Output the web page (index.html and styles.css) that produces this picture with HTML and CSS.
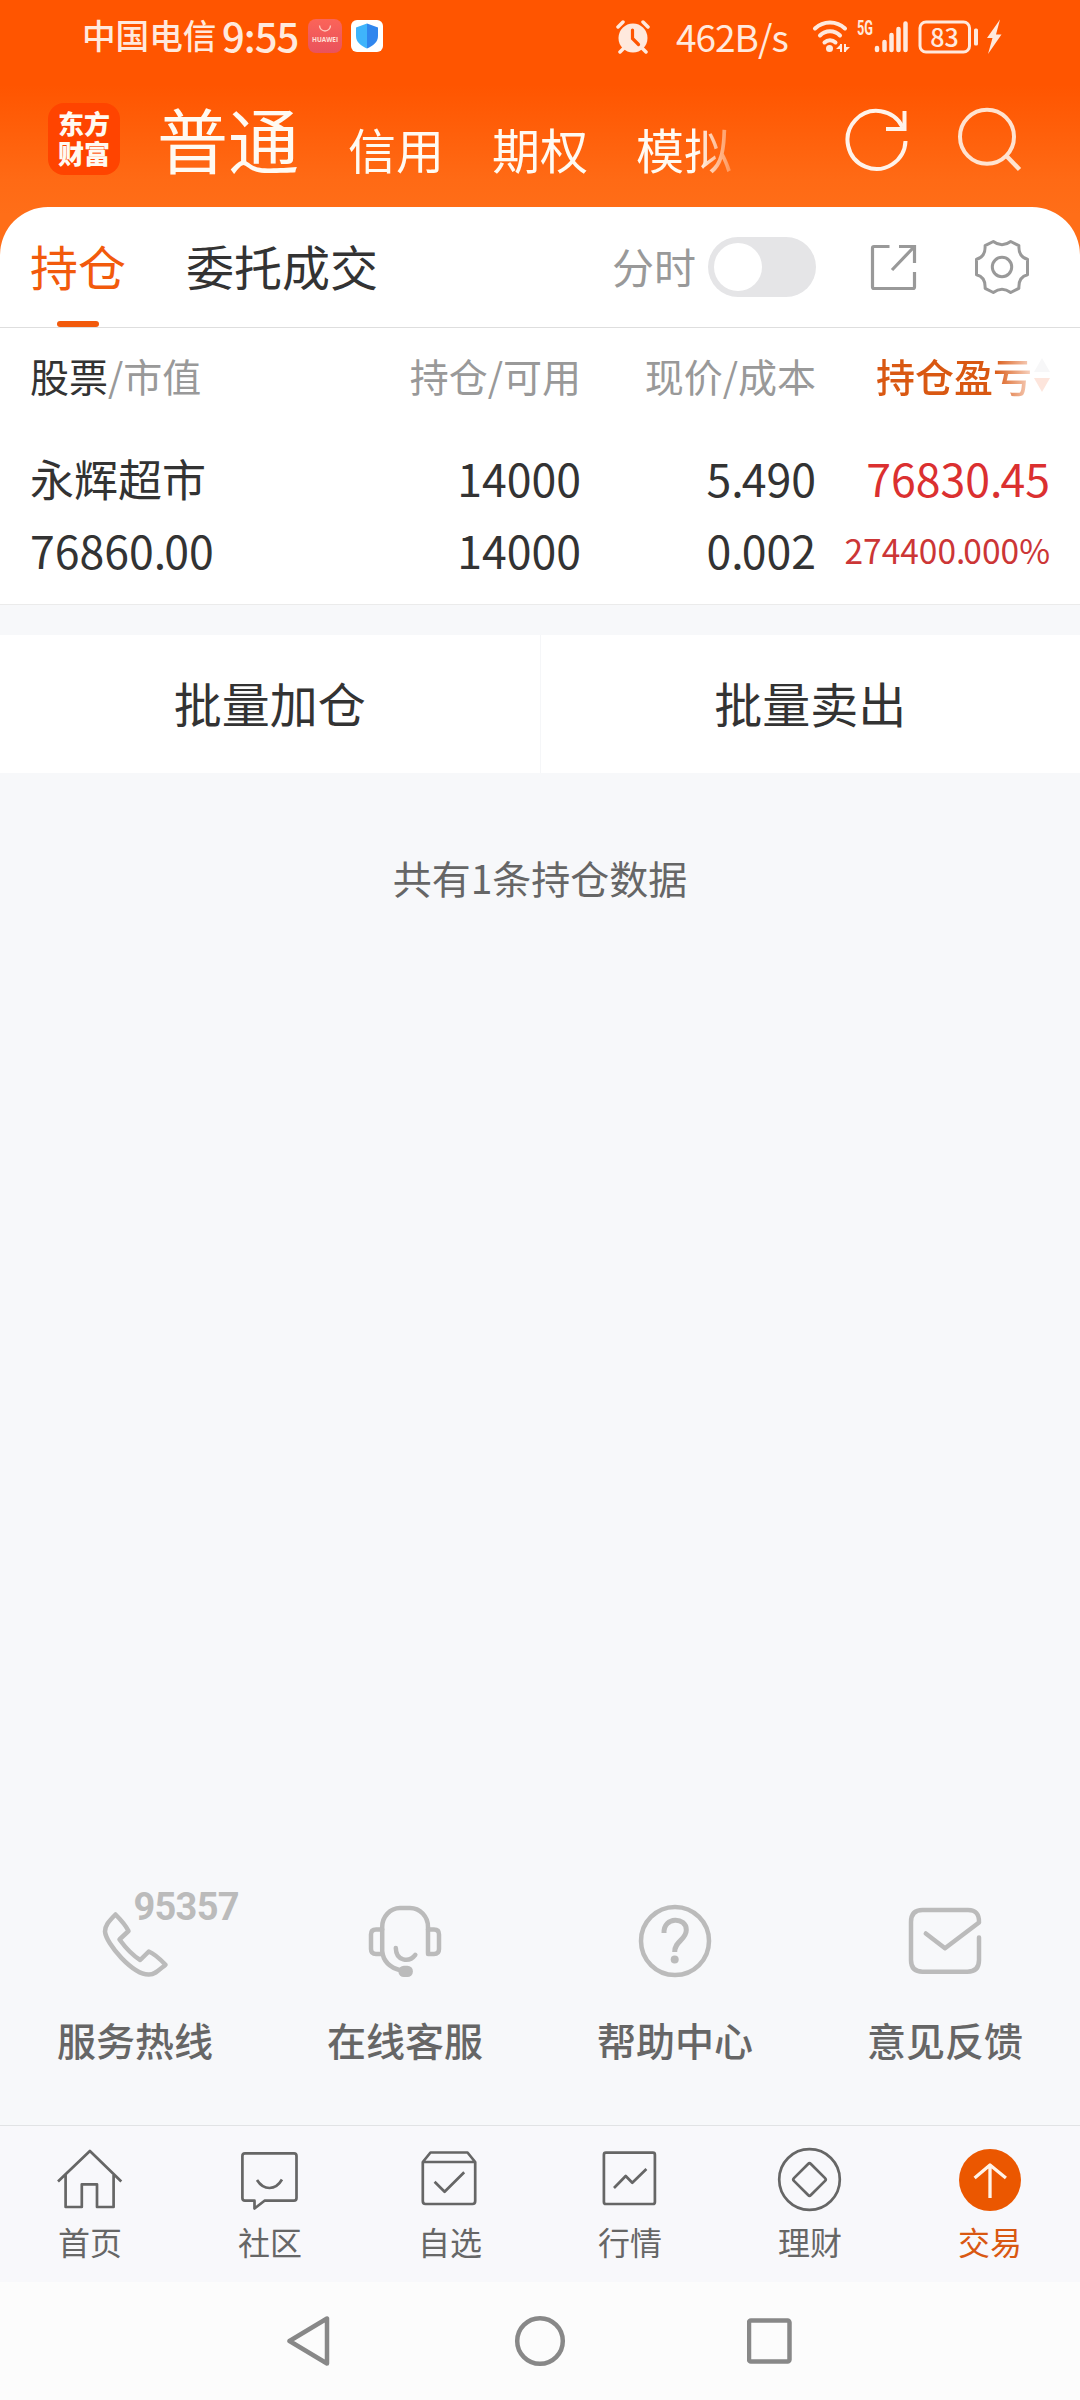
FILE: index.html
```html
<!DOCTYPE html>
<html lang="zh-CN">
<head>
<meta charset="utf-8">
<title>持仓</title>
<link rel="stylesheet" href="styles.css">
</head>
<body>
<div class="screen">
  <header class="top">
    <div class="status">
      <span class="carrier">中国电信</span>
      <span class="clock">9:55</span>
      <svg class="app-huawei" width="34" height="34" viewBox="0 0 34 34">
        <defs><linearGradient id="hw" x1="0" y1="0" x2="0" y2="1"><stop offset="0" stop-color="#fb6459"/><stop offset="1" stop-color="#e9525c"/></linearGradient></defs>
        <rect width="34" height="34" rx="8" fill="url(#hw)"/>
        <path d="M11.500 6.500a5.500 5.500 0 0 0 11 0" fill="none" stroke="#ffc9bd" stroke-width="1.300"/>
        <text x="17" y="22.500" text-anchor="middle" textLength="26" lengthAdjust="spacingAndGlyphs" class="hw-text">HUAWEI</text>
      </svg>
      <svg class="app-shield" width="32" height="32" viewBox="0 0 32 32">
        <rect width="32" height="32" rx="6" fill="#fff"/>
        <path d="M16 3.500 5 7.500V16c0 6 5 10 11 12.500z" fill="#3fb4fb"/>
        <path d="M16 3.500 27 7.500V16c0 6-5 10-11 12.500z" fill="#2f86ee"/>
      </svg>
      <svg class="alarm" width="34" height="34" viewBox="0 0 34 34">
        <circle cx="17" cy="18" r="14.500" fill="#ffe9dd"/>
        <path d="M2 7 7 2M32 7 27 2M4 32l4-4M30 32l-4-4" stroke="#ffe9dd" stroke-width="3.500" stroke-linecap="round"/>
        <path d="M16.500 10v8.500l6 6" fill="none" stroke="#ff5500" stroke-width="3.200" stroke-linecap="round"/>
      </svg>
      <span class="speed">462B/s</span>
      <svg class="signals" width="196" height="40" viewBox="0 0 196 40">
        <g fill="none" stroke="#ffe9dd" stroke-width="4" stroke-linecap="round">
          <path d="M4 11.500a21.500 21.500 0 0 1 30 0"/>
          <path d="M9 18.500a14 14 0 0 1 20 0"/>
          <path d="M13.500 25.500a8 8 0 0 1 11 0"/>
          <path d="M66 33v-2M73.500 33v-8M80.500 33V18M87.500 33V12M94.500 33V6.500" stroke-width="4.500"/>
        </g>
        <circle cx="18.500" cy="31.500" r="3.500" fill="#ffe9dd"/>
        <path d="M30 27v8M34 27v8" stroke="#ffe9dd" stroke-width="2"/>
        <path d="M30 27l-5 5h5zM34 35l5-5h-5z" fill="#ffe9dd"/>
        <text x="46" y="18" textLength="16" lengthAdjust="spacingAndGlyphs" class="net-text">5G</text>
        <rect x="109" y="5" width="49.500" height="30" rx="6" fill="none" stroke="#ffe9dd" stroke-width="3"/>
        <rect x="163" y="11.500" width="4" height="17" rx="1.500" fill="#ffe9dd"/>
        <text x="133.500" y="29.500" text-anchor="middle" class="bat-text">83</text>
        <path d="M189 2.500 176 21h5.500L177 37 190.500 17.500h-5.500z" fill="#ffe9dd"/>
      </svg>
    </div>
    <div class="nav">
      <div class="logo">东方<br>财富</div>
      <nav class="accounts">
        <span class="account-active">普通</span>
        <span>信用</span>
        <span>期权</span>
        <span>模拟</span>
      </nav>
      <svg class="refresh" width="66" height="66" viewBox="0 0 66 66" fill="none" stroke="#fff3ea" stroke-width="4">
        <path d="M61.500 34A29 29 0 1 1 58.500 20"/><path d="M60.500 4v19.700M42 22h20.500"/>
      </svg>
      <svg class="search" width="66" height="66" viewBox="0 0 66 66" fill="none" stroke="#ffe3d0" stroke-width="4">
        <circle cx="31" cy="29.700" r="27"/><path d="M50.500 49 63.500 62.500" stroke-width="4.500"/>
      </svg>
    </div>
  </header>

  <main class="sheet">
    <div class="tabs">
      <span class="tab tab-active">持仓</span>
      <span class="tab">委托成交</span>
      <span class="timing">分时</span>
      <span class="toggle"><i class="knob"></i></span>
      <svg class="export" width="48" height="48" viewBox="0 0 48 48" fill="none" stroke="#999" stroke-width="3.200" stroke-linejoin="round">
        <path d="M19.500 3.500H4q-1.500 0-1.500 1.500v39q0 1.500 1.500 1.500h39q1.500 0 1.500-1.500V29"/>
        <path d="M29 3.500h15.500V20M43 5 22 27" stroke-linejoin="miter"/>
      </svg>
      <svg class="gear" width="56" height="56" viewBox="0 0 56 56" fill="none" stroke="#999" stroke-width="3" stroke-linejoin="round">
        <path d="M19.300 2.500Q28 9 36.700 2.500L44.900 6.700Q44.300 18 53.500 20.200V35.800Q44.300 38 44.900 49.300L36.700 53.500Q28 47 19.300 53.500L11.100 49.300Q11.700 38 2.500 35.800V20.200Q11.700 18 11.100 6.700Z"/>
        <circle cx="28" cy="28" r="9.700"/>
      </svg>
    </div>
    <div class="holdings">
      <div class="row head">
        <span><b>股票</b>/市值</span>
        <span class="num">持仓/可用</span>
        <span class="num">现价/成本</span>
        <span class="sorted">持仓盈亏
          <svg width="16" height="34" viewBox="0 0 16 34"><path d="M8 0 16 14H0z" fill="#f7f7f8"/><path d="M8 34 16 20H0z" fill="#fde5dc"/></svg>
        </span>
      </div>
      <div class="row body">
        <span class="name">永辉超市</span><span class="num">14000</span><span class="num">5<i>.</i>490</span><span class="num gain">76830<i>.</i>45</span>
      </div>
      <div class="row body">
        <span>76860<i>.</i>00</span><span class="num">14000</span><span class="num">0<i>.</i>002</span><span class="num gain rate">274400<i>.</i>000%</span>
      </div>
    </div>
  </main>

  <div class="batch">
    <span>批量加仓</span>
    <span>批量卖出</span>
  </div>
  <p class="count">共有1条持仓数据</p>

  <div class="services">
    <div class="service">
      <svg width="270" height="100" viewBox="0 0 270 100">
        <path d="M115.500 34.500C108 42 105 46 105 51.500C106 64 133 95 149 94.500C155 94.500 159 90 165.500 84.700C160 79 155 74 148.800 71.500L140.200 80C132 75 125 67 119.500 59.500L128.500 51C125 44 120 39 115.500 34.500Z"/>
        <text x="186.500" y="40" text-anchor="middle" textLength="106" class="hotline">95357</text>
      </svg>
      <span>服务热线</span>
    </div>
    <div class="service">
      <svg width="270" height="100" viewBox="0 0 270 100">
        <path d="M158 73V47A18 19 0 0 0 140 28H130A18 19 0 0 0 112.200 47V71Q113.500 86 131 90.500"/>
        <path d="M112.200 49.500H106q-5 0-5 5V69q0 5 5 5h6.200M158 49.500h6q5 0 5 5V69q0 5-5 5h-6"/>
        <path d="M125.800 68C126 81 139 83 145.300 74.800"/>
        <rect x="128.400" y="85.700" width="14.500" height="11.300" rx="5.500" class="fill"/>
      </svg>
      <span>在线客服</span>
    </div>
    <div class="service">
      <svg width="270" height="100" viewBox="0 0 270 100">
        <circle cx="135" cy="61" r="34"/>
        <path d="M124 53C123.500 36 146.500 37 146.300 50C146.300 60 134.500 61 134.700 72" stroke-linecap="butt" stroke-width="5"/>
        <circle cx="134.700" cy="79.500" r="4" class="fill"/>
      </svg>
      <span>帮助中心</span>
    </div>
    <div class="service">
      <svg width="270" height="100" viewBox="0 0 270 100">
        <path d="M115.800 53.500 135 68.200 169 42.500Q169.500 30 158 30H112.500Q101 30 101 42V80Q101 91.700 112.500 91.700H157.500Q169 91.700 169 80V57.500"/>
      </svg>
      <span>意见反馈</span>
    </div>
  </div>

  <nav class="bottom">
    <div class="item">
      <svg width="180" height="90" viewBox="0 0 180 90"><path d="M58 51.500 89.900 21 121.300 51.500M65.600 45V77H81.800V54.300H97V77H113.600V45"/></svg>
      <span>首页</span>
    </div>
    <div class="item">
      <svg width="180" height="90" viewBox="0 0 180 90"><path d="M65 23.300H114Q116.500 23.300 116.500 26V68Q116.500 70.700 114 70.700H84.500L74.500 78.500V70.700H65Q62.400 70.700 62.400 68V26Q62.400 23.300 65 23.300ZM77 50Q82 58 89.500 58T102 49.500"/></svg>
      <span>社区</span>
    </div>
    <div class="item">
      <svg width="180" height="90" viewBox="0 0 180 90"><path d="M62.800 32 70.500 22.500H107.500L115.200 32V71Q115.200 74 112.500 74H65.500Q62.800 74 62.800 71ZM62.800 32H115.200M74.600 51.700 84.600 61.700 104.200 42.300"/></svg>
      <span>自选</span>
    </div>
    <div class="item">
      <svg width="180" height="90" viewBox="0 0 180 90"><rect x="63.900" y="22.700" width="51" height="51.300" rx="2"/><path d="M74 58 85.700 46 92.300 52.700 106.400 39"/></svg>
      <span>行情</span>
    </div>
    <div class="item">
      <svg width="180" height="90" viewBox="0 0 180 90"><circle cx="89.500" cy="49.500" r="30.300"/><rect x="77.500" y="37.500" width="24" height="24" rx="2" transform="rotate(45 89.500 49.500)"/></svg>
      <span>理财</span>
    </div>
    <div class="item item-active">
      <svg width="180" height="90" viewBox="0 0 180 90"><circle cx="90" cy="50" r="31" fill="#eb5700" stroke="none"/><path d="M90 68V35M74.600 48 90 35 105.900 48" stroke="#fff3e8" stroke-width="3.300"/></svg>
      <span>交易</span>
    </div>
  </nav>

  <div class="system">
    <svg width="46" height="52" viewBox="0 0 46 52"><path d="M40 3.500V48.500L2.500 26Z"/></svg>
    <svg width="52" height="52" viewBox="0 0 52 52"><circle cx="26" cy="26" r="22.800"/></svg>
    <svg width="46" height="52" viewBox="0 0 46 52"><rect x="2" y="5.500" width="40.500" height="41" rx="2"/></svg>
  </div>
</div>
</body>
</html>
```
FILE: styles.css
```css
* { box-sizing: border-box; }
body {
  margin: 0;
  font-family: "Noto Sans CJK SC", sans-serif;
  color: #333;
  background: #f7f8fa;
}
svg { display: block; flex: none; }
i { font-style: normal; }
.screen {
  width: 1080px;
  height: 2400px;
  display: flex;
  flex-direction: column;
  overflow: hidden;
  background: #f7f8fa;
}

/* header */
.top {
  height: 260px;
  flex: none;
  background: linear-gradient(#ff5500 0, #ff5500 85px, #ff6a15 180px, #ff6e18 215px);
}
.status {
  height: 74px;
  display: flex;
  align-items: center;
  padding-left: 82px;
  color: #ffe9dd;
  white-space: nowrap;
}
.carrier { width: 140px; font-size: 33.6px; line-height: 40px; font-weight: 500; margin-top: -4px; }
.clock { width: 86px; font-size: 40px; line-height: 40px; font-weight: 500; letter-spacing: -1px; margin-top: -5px; }
.app-huawei { margin-top: -2px; }
.app-shield { margin: -2px 0 0 9px; }
.alarm { margin-left: 233px; }
.speed { width: 110px; margin: -3px 0 0 26px; font-size: 37px; line-height: 40px; letter-spacing: -1px; }
.signals { margin-left: 25px; }
.hw-text { font: bold 7px "Open Sans", sans-serif; fill: #ffe0d8; }
.net-text { font: bold 20px Roboto, sans-serif; fill: #ffe9dd; }
.bat-text { font: 500 25px "Noto Sans CJK SC", sans-serif; fill: #ffe9dd; }
.nav { height: 133px; display: flex; padding-left: 48px; color: #fffaf2; }
.logo {
  width: 72px;
  height: 72px;
  margin-top: 29px;
  padding-top: 5px;
  border-radius: 16px;
  background: #ff4400;
  text-align: center;
  font-size: 26px;
  line-height: 30px;
  font-weight: 900;
}
.accounts {
  width: 640px;
  height: 120px;
  margin-left: 37px;
  display: flex;
  align-items: baseline;
  font-size: 48px;
  line-height: 72px;
  padding-top: 26px;
  white-space: nowrap;
  -webkit-mask-image: linear-gradient(90deg, #000 540px, transparent 590px);
  mask-image: linear-gradient(90deg, #000 540px, transparent 590px);
}
.accounts span { margin-right: 48px; padding-top: 1px; position: relative; top: 1px; }
.accounts .account-active { font-size: 71px; margin-right: 49px; top: 0; }
.refresh { margin: 33px 0 0 47px; }
.search { margin: 33px 0 0 46px; }

/* holdings sheet */
.sheet {
  height: 398px;
  flex: none;
  margin-top: -53px;
  background: #fff;
  border-radius: 48px 48px 0 0;
  border-bottom: 1px solid #ebebeb;
}
.tabs {
  height: 121px;
  display: flex;
  align-items: center;
  padding-left: 30px;
  border-bottom: 1px solid #dedede;
  white-space: nowrap;
}
.tab { height: 120px; font-size: 48px; line-height: 116px; margin-right: 60px; }
.tab-active { color: #f25a0c; display: flex; flex-direction: column; align-items: center; }
.tab-active::after { content: ""; width: 42px; height: 6px; margin-top: -2px; border-radius: 3px; background: #f25a0c; }
.timing { font-size: 42px; line-height: 60px; margin: -3px 0 0 174px; color: #999; }
.toggle { width: 108px; height: 60px; margin-left: 12px; padding: 6px; border-radius: 30px; background: #e5e5e7; }
.knob { display: block; width: 48px; height: 48px; border-radius: 50%; background: #fff; }
.export { margin-left: 54px; }
.gear { margin-left: 56px; }
.row {
  display: grid;
  grid-template-columns: 270px 281px 235px 234px;
  padding-left: 30px;
  align-items: center;
  white-space: nowrap;
}
.num { text-align: right; }
.head { height: 93px; font-size: 39px; color: #999; }
.head b { font-weight: 400; color: #333; }
.sorted {
  display: flex;
  align-items: center;
  justify-content: space-between;
  margin-left: 60px;
  font-weight: 500;
  background: linear-gradient(90deg, #d95812 118px, #fbe3d8 160px);
  -webkit-background-clip: text;
  background-clip: text;
  color: transparent;
}
.body { height: 72px; font-size: 44.6px; line-height: 72px; }
.body i { letter-spacing: -2px; }
.name { font-size: 44px; }
.head + .body { margin-top: 21px; }
.gain { color: #db3030; }
.rate { font-size: 33.5px; color: #cc3636; }

/* batch actions */
.batch { height: 138px; flex: none; margin-top: 30px; display: flex; background: #fff; }
.batch span { flex: 1; text-align: center; font-size: 48px; line-height: 134px; }
.batch span:first-child { border-right: 1px solid #f5f6f8; }
.count { margin: 75px 0 0; text-align: center; font-size: 39px; line-height: 58px; color: #666; }

/* service shortcuts */
.services { display: flex; margin-top: auto; height: 245px; flex: none; }
.service { width: 270px; text-align: center; font-size: 39px; line-height: 58px; font-weight: 500; color: #666; }
.service svg { fill: none; stroke: #bbb; stroke-width: 4.5; stroke-linecap: round; stroke-linejoin: round; margin-bottom: 30px; }
.service .fill { fill: #bbb; stroke: none; }
.service .hotline { font: bold 38px Roboto, sans-serif; fill: #bbb; stroke: none; }

/* bottom tab bar */
.bottom { height: 157px; flex: none; display: flex; padding-top: 4px; border-top: 1px solid #e1e3e5; background: #f8f8fb; }
.item { width: 180px; text-align: center; font-size: 32px; line-height: 43px; color: #666; }
.item svg { fill: none; stroke: #666; stroke-width: 2.7; stroke-linejoin: round; }
.item-active { color: #d95812; }
.system { height: 118px; flex: none; display: flex; align-items: center; justify-content: center; gap: 181px; background: #fcfcfc; }
.system svg { fill: none; stroke: #888; stroke-width: 4.5; stroke-linejoin: round; }
```
